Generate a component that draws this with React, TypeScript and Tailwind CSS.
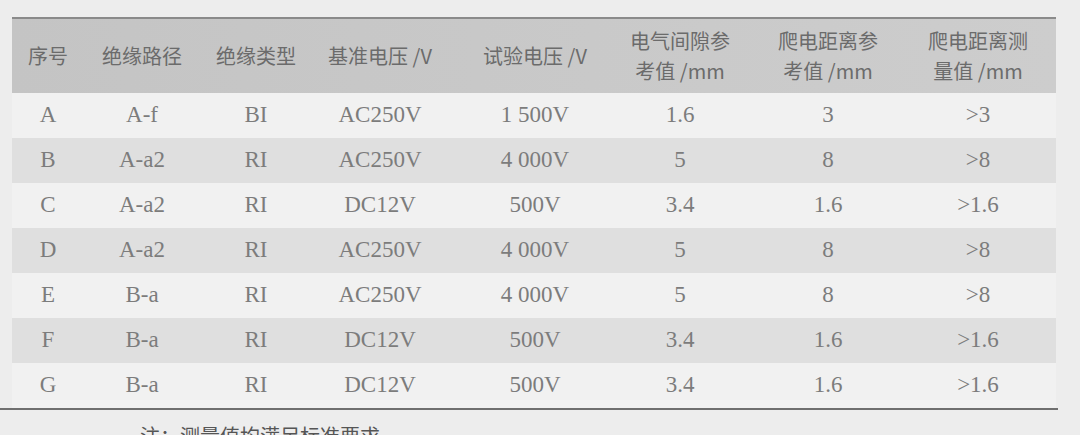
const columns = [
  { label: ["序号"], w: "w-[72px]" },
  { label: ["绝缘路径"], w: "w-[116px]" },
  { label: ["绝缘类型"], w: "w-[112px]" },
  { label: ["基准电压 /V"], w: "w-[136px]" },
  { label: ["试验电压 /V"], w: "w-[174px]" },
  { label: ["电气间隙参", "考值 /mm"], w: "w-[116px]" },
  { label: ["爬电距离参", "考值 /mm"], w: "w-[180px]" },
  { label: ["爬电距离测", "量值 /mm"], w: "w-[138px] pr-[18px]" },
];

const rows = [
  ["A", "A-f", "BI", "AC250V", "1 500V", "1.6", "3", ">3"],
  ["B", "A-a2", "RI", "AC250V", "4 000V", "5", "8", ">8"],
  ["C", "A-a2", "RI", "DC12V", "500V", "3.4", "1.6", ">1.6"],
  ["D", "A-a2", "RI", "AC250V", "4 000V", "5", "8", ">8"],
  ["E", "B-a", "RI", "AC250V", "4 000V", "5", "8", ">8"],
  ["F", "B-a", "RI", "DC12V", "500V", "3.4", "1.6", ">1.6"],
  ["G", "B-a", "RI", "DC12V", "500V", "3.4", "1.6", ">1.6"],
];

const App = () => {
  return (
    <div className="h-[435px] overflow-hidden bg-[#ededed] pt-[17px]">
      {/* Table */}
      <div className="ml-[12px] w-[1044px]">
        {/* Header */}
        <div className="flex h-[76px] border-t-2 border-[#8a8a8a] bg-gradient-to-r from-[#c4c4c4] to-[#cdcdcd] font-['Noto_Sans_CJK_SC','Noto_Sans',sans-serif] text-[20px] leading-[30px] text-[#6b6b6b]">
          {columns.map((col, i) => (
            <div key={i} className={`${col.w} flex flex-col items-center justify-center whitespace-nowrap`}>
              {col.label.map((line, j) => (
                <span key={j}>{line}</span>
              ))}
            </div>
          ))}
        </div>

        {/* Body */}
        {rows.map((row, r) => (
          <div
            key={r}
            className={`flex h-[45px] font-['Liberation_Serif',serif] text-[23px] text-[#7c7c7c] ${
              r % 2 === 1 ? "bg-[#dfdfdf]" : "bg-[#f1f1f1]"
            }`}
          >
            {row.map((cell, i) => (
              <div key={i} className={`${columns[i].w} flex items-center justify-center whitespace-nowrap`}>
                {cell}
              </div>
            ))}
          </div>
        ))}
      </div>

      {/* Bottom rule */}
      <div className="h-[2px] w-[1058px] bg-[#6f6f6f]" />

      {/* Caption (cut off at the bottom edge) */}
      <div className="mt-[16px] pl-[140px] font-['Noto_Sans_CJK_SC',sans-serif] text-[20px] leading-none text-[#555]">
        注：测量值均满足标准要求
      </div>
    </div>
  );
};

export default App;
